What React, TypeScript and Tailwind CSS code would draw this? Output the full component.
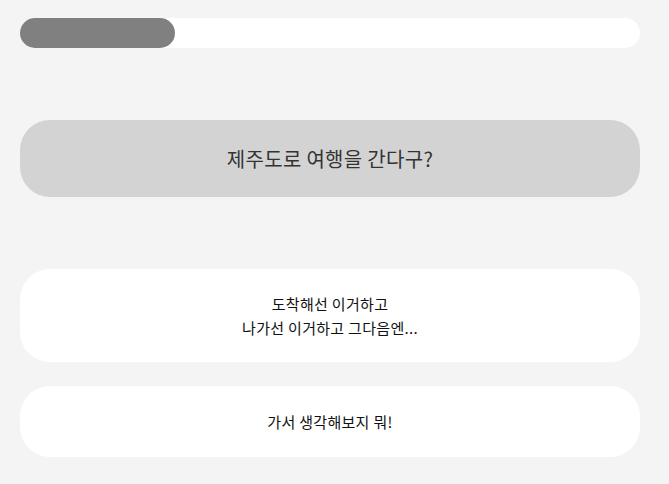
export default function App() {
  return (
    <div
      className="min-h-[484px] w-full bg-[#f4f4f4] pl-5 pr-[29px] pt-[18px]"
      style={{ fontFamily: '"Noto Sans CJK KR", "Noto Sans", sans-serif' }}
    >
      <div className="h-[30px] w-full rounded-full bg-white">
        <div className="h-full w-[25%] rounded-full bg-[#808080]" />
      </div>
      <div className="mt-[72px] flex h-[77px] items-center justify-center rounded-[30px] bg-[#d3d3d3] text-[20px] tracking-[0.3px] text-[#333333]">
        제주도로 여행을 간다구?
      </div>
      <div className="mt-[72px] flex h-[93px] flex-col items-center justify-center rounded-[30px] bg-white text-[15px] leading-6 tracking-[0.3px] text-[#111111]">
        <span>도착해선 이거하고</span>
        <span>나가선 이거하고 그다음엔...</span>
      </div>
      <div className="mt-6 flex h-[71px] items-center justify-center rounded-[30px] bg-white text-[15px] leading-6 tracking-[0.3px] text-[#111111]">
        가서 생각해보지 뭐!
      </div>
    </div>
  );
}
